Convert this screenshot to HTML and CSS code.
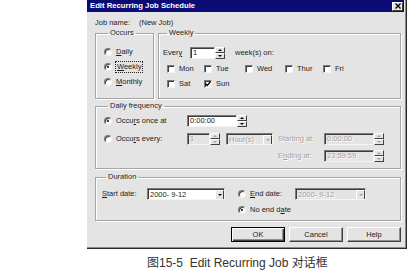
FILE: index.html
```
<!DOCTYPE html>
<html lang="en">
<head>
  <meta charset="UTF-8" />
  <title>Edit Recurring Job Schedule</title>
  <link rel="stylesheet" href="styles.css">
</head>
<body>

  <div class="page">
    <div class="dialog">
      <div class="titlebar">
        <span>Edit Recurring Job Schedule</span>
        <span class="close-btn">
          <svg width="8" height="6" viewBox="0 0 8 6"><path d="M1.5 0.5 L6.5 5.5 M6.5 0.5 L1.5 5.5" stroke="#000" stroke-width="1.3"/></svg>
        </span>
      </div>

      <div class="dlg-body">
        <div class="job-row">
          <span class="job-label">Job name:</span>
          <span>(New Job)</span>
        </div>

        <div class="top-groups">
          <fieldset class="group occurs">
            <legend>Occurs</legend>
            <div class="opt"><span class="radio"></span><span><u>D</u>aily</span></div>
            <div class="opt"><span class="radio on"></span><span class="focus"><u>W</u>eekly</span></div>
            <div class="opt"><span class="radio"></span><span><u>M</u>onthly</span></div>
          </fieldset>

          <fieldset class="group weekly">
            <legend>Weekly</legend>
            <div class="every-row">
              <span class="every-label">Ever<u>y</u></span>
              <span class="spin">
                <span class="field w-25">1</span>
                <span class="spin-btns"><i class="up"></i><i class="down"></i></span>
              </span>
              <span class="weeks-on">week(s) on:</span>
            </div>
            <div class="days">
              <div class="opt"><span class="check"></span><span>Mon</span></div>
              <div class="opt"><span class="check"></span><span>Tue</span></div>
              <div class="opt"><span class="check"></span><span>Wed</span></div>
              <div class="opt"><span class="check"></span><span>Thur</span></div>
              <div class="opt"><span class="check"></span><span>Fri</span></div>
              <div class="opt"><span class="check"></span><span>Sat</span></div>
              <div class="opt"><span class="check on"><svg width="6" height="6" viewBox="0 0 6 6"><path d="M0.5 2.5 L2.2 4.5 L5.5 0.8" stroke="#000" stroke-width="1.3" fill="none"/></svg></span><span>Sun</span></div>
            </div>
          </fieldset>
        </div>

        <fieldset class="group daily">
          <legend>Daily frequency</legend>
          <div class="daily-grid">
            <div class="opt"><span class="radio on"></span><span>Occu<u>r</u>s once at</span></div>
            <span class="spin span-2">
              <span class="field w-50">0:00:00</span>
              <span class="spin-btns"><i class="up"></i><i class="down"></i></span>
            </span>

            <div class="opt col-1"><span class="radio"></span><span>Occu<u>r</u>s every:</span></div>
            <span class="spin off">
              <span class="field w-23">1</span>
              <span class="spin-btns"><i class="up"></i><i class="down"></i></span>
            </span>
            <span class="combo off w-47">
              <span class="combo-text">Hour(s)</span>
              <span class="drop"></span>
            </span>
            <span class="muted">Starting at:</span>
            <span class="spin off">
              <span class="field w-50">0:00:00</span>
              <span class="spin-btns"><i class="up"></i><i class="down"></i></span>
            </span>

            <span class="muted col-4">E<u>n</u>ding at:</span>
            <span class="spin off">
              <span class="field w-50">23:59:59</span>
              <span class="spin-btns"><i class="up"></i><i class="down"></i></span>
            </span>
          </div>
        </fieldset>

        <fieldset class="group duration">
          <legend>Duration</legend>
          <div class="duration-grid">
            <span><u>S</u>tart date:</span>
            <span class="combo w-78">
              <span class="combo-text">2000- 9-12</span>
              <span class="drop"></span>
            </span>
            <div class="opt"><span class="radio"></span><span><u>E</u>nd date:</span></div>
            <span class="combo off w-71">
              <span class="combo-text">2000- 9-12</span>
              <span class="drop"></span>
            </span>

            <div class="opt col-3"><span class="radio on"></span><span>No end d<u>a</u>te</span></div>
          </div>
        </fieldset>

        <div class="buttons">
          <button class="default">OK</button>
          <button>Cancel</button>
          <button>Help</button>
        </div>
      </div>
    </div>

    <p class="caption">图15-5&nbsp; Edit Recurring Job 对话框</p>
  </div>

</body>
</html>
```

FILE: styles.css
```
* { box-sizing: border-box; margin: 0; padding: 0; }
body {
  background: #fff; color: #1c1c1c;
  font-family: "Liberation Sans", Arial, sans-serif; font-size: 7.5px; line-height: 10px;
}
.page { width: 410px; height: 279px; overflow: hidden; }

/* dialog frame */
.dialog {
  margin-left: 87px; width: 320px; height: 249px;
  background: #e4e4e4;
  border-right: 1px solid #2a2a2a; border-bottom: 1px solid #2a2a2a;
  box-shadow: inset -1px -1px 0 #8c8c8c;
}
.titlebar {
  height: 12px; margin-right: 2px;
  display: flex; align-items: center; justify-content: space-between;
  padding: 0 1px 0 3px;
  background: #0b0b76; color: #fff;
  font-weight: bold; font-size: 7.7px;
}
.close-btn {
  width: 11px; height: 9px;
  display: flex; align-items: center; justify-content: center;
  background: #e4e4e4;
  border: 1px solid; border-color: #fff #404040 #404040 #fff;
}
.dlg-body { padding: 5px 0 0 8px; }

.job-row { height: 11px; display: flex; align-items: center; }
.job-label { width: 44px; }

/* group boxes */
.group {
  border: 1px solid #a6a6a6; min-width: 0;
  box-shadow: 1px 1px 0 #fff, inset 1px 1px 0 #fff;
}
.group legend { margin-left: 4px; padding: 0 2px; line-height: 10px; }
.top-groups { display: flex; gap: 4px; height: 71px; }
.occurs { width: 59px; padding: 6px 0 0 8px; }
.weekly { width: 243px; padding: 6px 0 0 4px; }
.daily { width: 306px; height: 68px; margin-top: 2px; padding: 3px 0 0 8px; }
.duration { width: 306px; height: 49px; margin-top: 3px; padding: 5px 0 0 6px; }

.opt { display: flex; align-items: center; gap: 4px; height: 15px; white-space: nowrap; }
.focus { outline: 1px dotted #222; outline-offset: 0; padding: 0 1px; }

/* radios and checks */
.radio {
  width: 8px; height: 8px; flex: none; border-radius: 50%;
  background: #fff;
  border: 1px solid; border-color: #7a7a7a #f4f4f4 #f4f4f4 #7a7a7a;
  box-shadow: inset 1px 1px 0 #3c3c3c;
  display: flex; align-items: center; justify-content: center;
}
.radio.on::after {
  content: ""; width: 2px; height: 2px; border-radius: 50%; background: #000;
}
.check {
  width: 8px; height: 8px; flex: none; background: #fff;
  border: 1px solid; border-color: #7a7a7a #f4f4f4 #f4f4f4 #7a7a7a;
  box-shadow: inset 1px 1px 0 #3c3c3c;
  display: flex; align-items: center; justify-content: center;
}

.every-row { height: 17px; display: flex; align-items: center; }
.every-label { width: 27px; }
.weeks-on { margin-left: 10px; }
.days {
  display: grid; padding-left: 4px;
  grid-template-columns: 37px 41px 40px 38px auto;
}

/* fields, spinners, combos */
.spin { display: flex; height: 12px; }
.field, .combo {
  height: 12px; padding-left: 2px; line-height: 10px;
  background: #fff;
  border: 1px solid; border-color: #7a7a7a #f4f4f4 #f4f4f4 #7a7a7a;
  box-shadow: inset 1px 1px 0 #3c3c3c;
  white-space: nowrap; overflow: hidden;
}
.combo { display: flex; padding: 1px 0 0 2px; }
.combo-text { flex: 1; line-height: 9px; }
.w-23 { width: 23px; }
.w-25 { width: 25px; }
.w-50 { width: 50px; }
.combo.w-47 { width: 47px; }
.combo.w-78 { width: 78px; }
.combo.w-71 { width: 71px; }
.spin-btns { width: 10px; display: flex; flex-direction: column; }
.spin-btns i, .drop {
  flex: 1; display: flex; align-items: center; justify-content: center;
  background: #e4e4e4;
  border: 1px solid; border-color: #fff #404040 #404040 #fff;
}
.drop { flex: none; width: 9px; height: 10px; }
i.up::after, i.down::after, .drop::after { content: ""; border: 2px solid transparent; }
i.up::after { border-bottom-color: #000; border-top-width: 0; }
i.down::after, .drop::after { border-top-color: #000; border-bottom-width: 0; }

.off .field, .combo.off { background: #e4e4e4; color: #a2a2a2; text-shadow: 1px 1px 0 #fff; }
.off i.up::after { border-bottom-color: #a2a2a2; }
.off i.down::after, .off .drop::after { border-top-color: #a2a2a2; }
.muted { color: #a2a2a2; text-shadow: 1px 1px 0 #fff; white-space: nowrap; }

.daily-grid {
  display: grid; align-items: center;
  grid-template-columns: 83px 39px 52px 46px 60px;
  grid-template-rows: 14px 14px 14px; row-gap: 3.5px;
}
.span-2 { grid-column: 2 / span 2; }
.col-1 { grid-column: 1; }
.col-4 { grid-column: 4; }

.duration-grid {
  display: grid; align-items: center;
  grid-template-columns: 45px 91px 57px 71px;
  grid-template-rows: 13px 13px; row-gap: 3.5px;
}
.col-3 { grid-column: 3; }

/* buttons */
.buttons {
  width: 306px; margin-top: 6px;
  display: flex; justify-content: flex-end; gap: 4px;
}
.buttons button {
  width: 54px; height: 15px;
  font: inherit; color: #1c1c1c;
  background: #e4e4e4;
  border: 1px solid; border-color: #fff #404040 #404040 #fff;
  box-shadow: inset -1px -1px 0 #909090;
}
.buttons button.default {
  border: 1px solid #000;
  box-shadow: inset 1px 1px 0 #fff, inset -1px -1px 0 #404040, inset -2px -2px 0 #909090;
}

.caption {
  margin: 7px 0 0 147px; line-height: 14px;
  font-family: "Liberation Sans", "Noto Sans CJK SC", sans-serif;
  font-size: 12px; color: #333; white-space: nowrap;
}
```
